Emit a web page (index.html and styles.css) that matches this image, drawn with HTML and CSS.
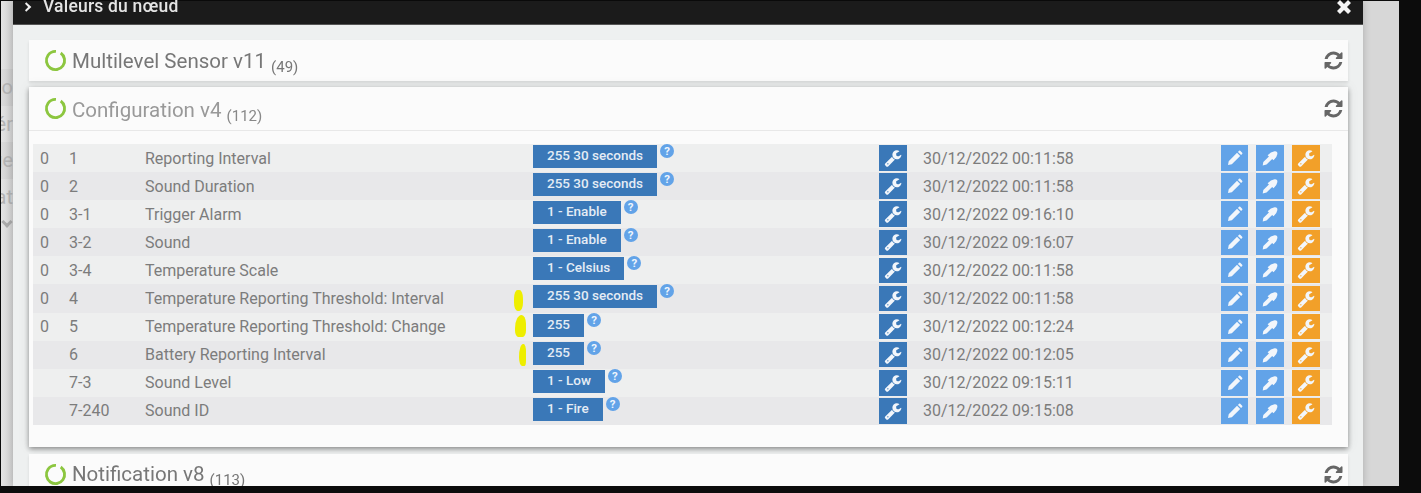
FILE: index.html
```html
<!DOCTYPE html>
<html lang="fr">
<head>
<meta charset="utf-8">
<title>Valeurs du nœud</title>
<link rel="stylesheet" href="styles.css">
</head>
<body>
<svg class="defs" width="0" height="0" aria-hidden="true">
  <symbol id="i-wrench" viewBox="0 0 1792 1792"><path d="M448 1472q0-26-19-45t-45-19-45 19-19 45 19 45 45 19 45-19 19-45zm644-420l-682 682q-37 37-90 37-52 0-91-37l-106-108q-38-36-38-90 0-53 38-91l681-681q39 98 114.5 173.5t173.5 114.5zm634-435q0 39-23 106-47 134-164.5 217.5t-258.5 83.5q-185 0-316.5-131.5t-131.5-316.5 131.5-316.5 316.5-131.5q58 0 121.5 16.5t107.5 46.5q16 11 16 28t-16 28l-293 169v224l193 107q5-3 79-48.5t135.5-81 70.5-35.5q15 0 23.5 10t8.5 25z"/></symbol>
  <symbol id="i-refresh" viewBox="0 0 1792 1792"><path d="M1639 1056q0 5-1 7-64 268-268 434.5t-478 166.5q-146 0-282.5-55t-243.5-157l-129 129q-19 19-45 19t-45-19-19-45v-448q0-26 19-45t45-19h448q26 0 45 19t19 45-19 45l-137 137q71 66 161 102t187 36q134 0 250-65t186-179q11-17 53-117 8-23 30-23h192q13 0 22.5 9.5t9.5 22.5zm25-800v448q0 26-19 45t-45 19h-448q-26 0-45-19t-19-45 19-45l138-138q-148-137-349-137-134 0-250 65t-186 179q-11 17-53 117-8 23-30 23h-199q-13 0-22.5-9.5t-9.5-22.5v-7q65-268 270-434.5t480-166.5q146 0 284 55.5t245 156.5l130-129q19-19 45-19t45 19 19 45z"/></symbol>
  <symbol id="i-pencil" viewBox="0 0 1792 1792"><path d="M200 1592l70-380 830-830 310 310-830 830zM1190 292l110-110q60-60 120-0l190 190q60 60 0 120l-110 110z"/></symbol>
  <symbol id="i-dropper" viewBox="0 0 1792 1792"><path d="M170 1640l60-340 560-560-130-130q300-330 700-390q300-20 270 270q-50 360-380 640l-140-140-560 560z"/></symbol>
  <symbol id="i-chev" viewBox="0 0 10 12"><path d="M1.5 0l6.5 6-6.5 6-1.5-2 4-4-4-4z"/></symbol>
  <symbol id="i-close" viewBox="0 0 14 14"><path d="M3 0l4 4 4-4 3 3-4 4 4 4-3 3-4-4-4 4-3-3 4-4-4-4z"/></symbol>
  <symbol id="i-ring" viewBox="0 0 24 24"><circle cx="12" cy="12" r="9.5" fill="none" stroke="#8cc63f" stroke-width="3" stroke-dasharray="54 5.7" transform="rotate(-55 12 12)"/></symbol>
</svg>
<div class="screen">
  <div class="backdrop">
    <span class="bg-line">o</span>
    <span class="bg-line">ér</span>
    <span class="bg-line">ge</span>
    <span class="bg-line">at</span>
    <span class="bg-chevron"></span>
  </div>
  <main class="modal">
    <header class="modal-head">
      <span class="modal-title"><svg class="chev"><use href="#i-chev"/></svg>Valeurs du nœud</span>
      <svg class="modal-close"><use href="#i-close"/></svg>
    </header>
    <div class="modal-body">
      <section class="panel">
        <div class="panel-head">
          <h2 class="panel-title"><svg class="ring"><use href="#i-ring"/></svg>Multilevel Sensor v11 <small>(49)</small></h2>
          <svg class="refresh"><use href="#i-refresh"/></svg>
        </div>
      </section>
      <section class="panel panel-open">
        <div class="panel-head panel-head-open">
          <h2 class="panel-title title-muted"><svg class="ring"><use href="#i-ring"/></svg>Configuration v4 <small>(112)</small></h2>
          <svg class="refresh"><use href="#i-refresh"/></svg>
        </div>
        <div class="rows">
          <div class="row"><span class="c-a">0</span><span>1</span><span>Reporting Interval</span><span class="val"><b class="val-btn">255 30 seconds</b><i class="help">?</i></span><a class="sq sq-dark"><svg><use href="#i-wrench"/></svg></a><span>30/12/2022 00:11:58</span><span class="acts"><a class="sq sq-blue"><svg><use href="#i-pencil"/></svg></a><a class="sq sq-blue"><svg><use href="#i-dropper"/></svg></a><a class="sq sq-orange"><svg><use href="#i-wrench"/></svg></a></span></div>
          <div class="row"><span class="c-a">0</span><span>2</span><span>Sound Duration</span><span class="val"><b class="val-btn">255 30 seconds</b><i class="help">?</i></span><a class="sq sq-dark"><svg><use href="#i-wrench"/></svg></a><span>30/12/2022 00:11:58</span><span class="acts"><a class="sq sq-blue"><svg><use href="#i-pencil"/></svg></a><a class="sq sq-blue"><svg><use href="#i-dropper"/></svg></a><a class="sq sq-orange"><svg><use href="#i-wrench"/></svg></a></span></div>
          <div class="row"><span class="c-a">0</span><span>3-1</span><span>Trigger Alarm</span><span class="val"><b class="val-btn">1 - Enable</b><i class="help">?</i></span><a class="sq sq-dark"><svg><use href="#i-wrench"/></svg></a><span>30/12/2022 09:16:10</span><span class="acts"><a class="sq sq-blue"><svg><use href="#i-pencil"/></svg></a><a class="sq sq-blue"><svg><use href="#i-dropper"/></svg></a><a class="sq sq-orange"><svg><use href="#i-wrench"/></svg></a></span></div>
          <div class="row"><span class="c-a">0</span><span>3-2</span><span>Sound</span><span class="val"><b class="val-btn">1 - Enable</b><i class="help">?</i></span><a class="sq sq-dark"><svg><use href="#i-wrench"/></svg></a><span>30/12/2022 09:16:07</span><span class="acts"><a class="sq sq-blue"><svg><use href="#i-pencil"/></svg></a><a class="sq sq-blue"><svg><use href="#i-dropper"/></svg></a><a class="sq sq-orange"><svg><use href="#i-wrench"/></svg></a></span></div>
          <div class="row"><span class="c-a">0</span><span>3-4</span><span>Temperature Scale</span><span class="val"><b class="val-btn">1 - Celsius</b><i class="help">?</i></span><a class="sq sq-dark"><svg><use href="#i-wrench"/></svg></a><span>30/12/2022 00:11:58</span><span class="acts"><a class="sq sq-blue"><svg><use href="#i-pencil"/></svg></a><a class="sq sq-blue"><svg><use href="#i-dropper"/></svg></a><a class="sq sq-orange"><svg><use href="#i-wrench"/></svg></a></span></div>
          <div class="row"><span class="c-a">0</span><span>4</span><span>Temperature Reporting Threshold: Interval</span><span class="val"><em class="mark mark-1"></em><b class="val-btn">255 30 seconds</b><i class="help">?</i></span><a class="sq sq-dark"><svg><use href="#i-wrench"/></svg></a><span>30/12/2022 00:11:58</span><span class="acts"><a class="sq sq-blue"><svg><use href="#i-pencil"/></svg></a><a class="sq sq-blue"><svg><use href="#i-dropper"/></svg></a><a class="sq sq-orange"><svg><use href="#i-wrench"/></svg></a></span></div>
          <div class="row"><span class="c-a">0</span><span>5</span><span>Temperature Reporting Threshold: Change</span><span class="val"><em class="mark mark-2"></em><b class="val-btn">255</b><i class="help">?</i></span><a class="sq sq-dark"><svg><use href="#i-wrench"/></svg></a><span>30/12/2022 00:12:24</span><span class="acts"><a class="sq sq-blue"><svg><use href="#i-pencil"/></svg></a><a class="sq sq-blue"><svg><use href="#i-dropper"/></svg></a><a class="sq sq-orange"><svg><use href="#i-wrench"/></svg></a></span></div>
          <div class="row"><span class="c-a"></span><span>6</span><span>Battery Reporting Interval</span><span class="val"><em class="mark mark-3"></em><b class="val-btn">255</b><i class="help">?</i></span><a class="sq sq-dark"><svg><use href="#i-wrench"/></svg></a><span>30/12/2022 00:12:05</span><span class="acts"><a class="sq sq-blue"><svg><use href="#i-pencil"/></svg></a><a class="sq sq-blue"><svg><use href="#i-dropper"/></svg></a><a class="sq sq-orange"><svg><use href="#i-wrench"/></svg></a></span></div>
          <div class="row"><span class="c-a"></span><span>7-3</span><span>Sound Level</span><span class="val"><b class="val-btn">1 - Low</b><i class="help">?</i></span><a class="sq sq-dark"><svg><use href="#i-wrench"/></svg></a><span>30/12/2022 09:15:11</span><span class="acts"><a class="sq sq-blue"><svg><use href="#i-pencil"/></svg></a><a class="sq sq-blue"><svg><use href="#i-dropper"/></svg></a><a class="sq sq-orange"><svg><use href="#i-wrench"/></svg></a></span></div>
          <div class="row"><span class="c-a"></span><span>7-240</span><span>Sound ID</span><span class="val"><b class="val-btn">1 - Fire</b><i class="help">?</i></span><a class="sq sq-dark"><svg><use href="#i-wrench"/></svg></a><span>30/12/2022 09:15:08</span><span class="acts"><a class="sq sq-blue"><svg><use href="#i-pencil"/></svg></a><a class="sq sq-blue"><svg><use href="#i-dropper"/></svg></a><a class="sq sq-orange"><svg><use href="#i-wrench"/></svg></a></span></div>
        </div>
      </section>
      <section class="panel">
        <div class="panel-head">
          <h2 class="panel-title"><svg class="ring"><use href="#i-ring"/></svg>Notification v8 <small>(113)</small></h2>
          <svg class="refresh"><use href="#i-refresh"/></svg>
        </div>
      </section>
    </div>
  </main>
  <div class="backdrop-right"></div>
</div>
</body>
</html>
```
FILE: styles.css
```css
* { box-sizing: border-box; }
html, body { margin: 0; height: 100%; background: #0c0c0c; overflow: hidden; }
body { font-family: Roboto, "Liberation Sans", sans-serif; }
.defs { position: absolute; }
.screen {
  display: flex;
  width: 1399px;
  height: 486px;
  padding: 1px 0 0 1px;
  overflow: hidden;
  filter: blur(0.5px);
}
.backdrop {
  width: 12px;
  flex: none;
  background: linear-gradient(90deg, #e4e4e4, #d2d2d2);
  display: flex;
  flex-direction: column;
  align-items: flex-end;
  color: #b4b4b4;
  font-size: 20px;
  padding-top: 68px;
  overflow: hidden;
}
.bg-line { height: 36.5px; width: 12px; line-height: 36.5px; white-space: nowrap; display: flex; justify-content: flex-end; flex: none; }
.bg-line:nth-child(odd) { background: rgba(0,0,0,.035); }
.bg-chevron {
  width: 8px; height: 8px;
  flex: none;
  margin: 3px 2px 0 0;
  border-right: 3px solid #aaa;
  border-bottom: 3px solid #aaa;
  transform: rotate(45deg);
}
.modal {
  width: 1350px;
  flex: none;
  display: flex;
  flex-direction: column;
  background: #eef0f0;
  box-shadow: 0 0 8px rgba(0,0,0,.2);
  position: relative;
}
.modal-head {
  height: 24px;
  flex: none;
  background: #1b1b1b;
  border-bottom: 1px solid #555;
  color: #e4e4e4;
  display: flex;
  justify-content: space-between;
  align-items: flex-start;
  padding: 0 12px;
}
.modal-title { font-size: 17.5px; line-height: 11px; font-weight: 500; letter-spacing: .2px; display: flex; align-items: center; }
.chev { width: 8px; height: 10px; fill: #f0f0f0; margin-right: 10px; }
.modal-close { width: 14px; height: 14px; margin-top: -1px; fill: #f4f4f4; }
.modal-body {
  padding: 15px 15px 0 16px;
  display: flex;
  flex-direction: column;
  min-height: 0;
}
.panel {
  flex: none;
  background: #fbfbfb;
  margin-bottom: 6px;
  box-shadow: 0 2px 3px rgba(0,0,0,.1);
}
.panel-open { margin-bottom: 7px; box-shadow: 0 2px 5px rgba(0,0,0,.4), 0 0 12px rgba(0,0,0,.08); padding-bottom: 22px; }
.panel-head {
  height: 41px;
  padding: 0 4px 0 16px;
  display: flex;
  justify-content: space-between;
  align-items: center;
}
.panel-head-open { height: 44px; border-bottom: 1px solid #e8e8e8; }
.panel-title {
  margin: 0;
  font-size: 20.5px;
  font-weight: 400;
  color: #777;
  display: flex;
  align-items: center;
  white-space: pre;
}
.panel-head-open .panel-title { padding-top: 2px; }
.panel-head-open .ring { margin-top: -2px; }
.panel-title small { font-size: 15px; align-self: flex-end; position: relative; top: 3px; }
.title-muted { color: #999; }
.title-muted small { color: #888; }
.ring { width: 23px; height: 23px; margin: 0 5px 0 -1px; }
.refresh { width: 21px; height: 21px; fill: #666; }
.rows {
  margin: 13px 16px 0 4px;
  display: grid;
  grid-auto-rows: 28.1px;
  font-size: 16px;
  color: #7c7c7c;
}
.row {
  display: grid;
  grid-template-columns: 36px 76px 388px 346px 44px 298px 1fr;
  align-items: center;
  background: #eeefef;
}
.row:nth-child(even) { background: #e8e8ea; }
.c-a { padding-left: 7px; }
.val { display: flex; align-items: flex-start; position: relative; height: 100%; padding-top: 1px; }
.val-btn {
  height: 23px;
  padding: 0 14px;
  background: #3a78b8;
  color: #e4ecf5;
  font-size: 13.5px;
  font-weight: 500;
  line-height: 21px;
  white-space: nowrap;
}
.help {
  width: 14px;
  height: 14px;
  margin: -1px 0 0 3px;
  border-radius: 50%;
  background: #62a3e8;
  color: #eef5fd;
  font: 700 11.5px/14px Roboto, sans-serif;
  text-align: center;
}
.mark { position: absolute; background: #eeee00; border-radius: 40%; }
.mark-1 { left: -19px; top: 6px; width: 9px; height: 21px; }
.mark-2 { left: -18px; top: 2px; width: 11px; height: 22px; border-radius: 60% 40% 30% 30%; }
.mark-3 { left: -14px; top: 3px; width: 7px; height: 22px; border-radius: 70% 40% 30% 50%; }
.sq {
  width: 28px;
  height: 25.5px;
  display: flex;
  align-items: center;
  justify-content: center;
}
.sq svg { width: 18px; height: 18px; fill: #f2f6fb; }
.sq-dark { background: #3a78b8; }
.sq-blue { background: #62a3e8; }
.sq-orange { background: #f2a029; }
.acts { display: flex; gap: 8px; }
.acts .sq:first-child { width: 27px; }
.backdrop-right { flex: 1; background: #d7d7d7; }
```
